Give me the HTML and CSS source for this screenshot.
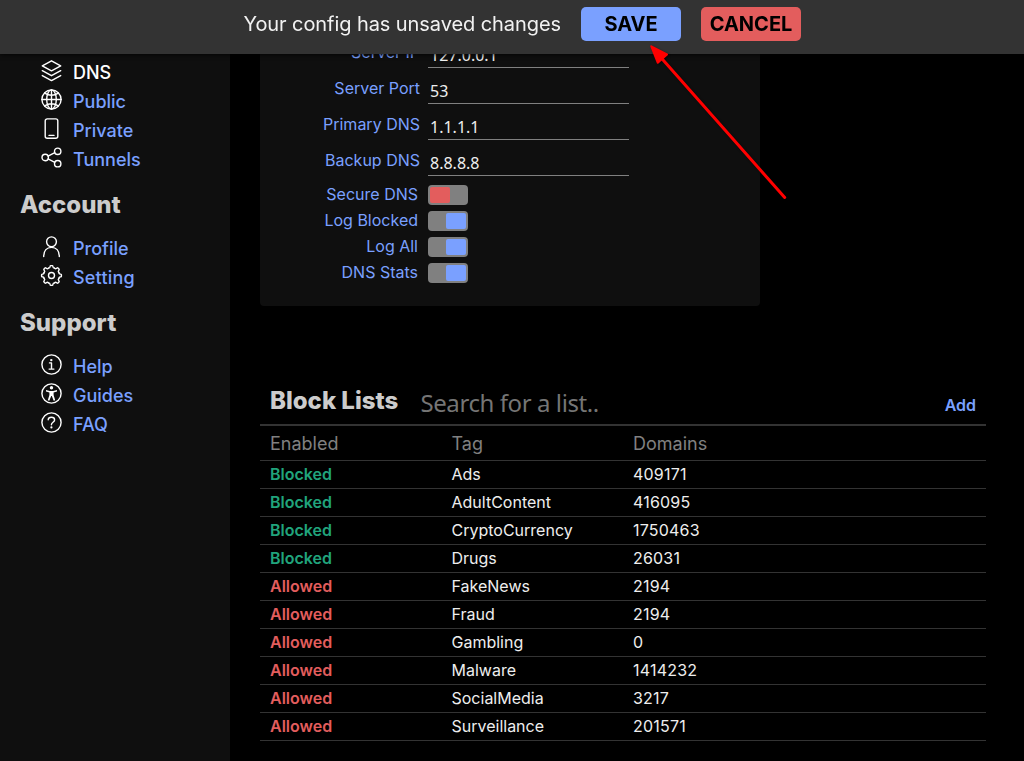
FILE: index.html
```html
<!DOCTYPE html>
<html lang="en">
<head>
<meta charset="utf-8">
<title>DNS configuration</title>
<link rel="stylesheet" href="styles.css">
</head>
<body>
<header class="notice">
  <span class="notice-text">Your config has unsaved changes</span>
  <button class="btn btn-save">SAVE</button>
  <button class="btn btn-cancel">CANCEL</button>
</header>
<div class="layout">
  <nav class="sidebar">
    <ul class="menu">
      <li class="item active"><svg class="icon" viewBox="-0.5 -0.5 22 22"><path d="M11 1.3 20.2 6.3 11 11.3 1.8 6.3ZM1.8 11.2 11 16.2 20.2 11.2M1.8 16.1 11 21.1 20.2 16.1"/></svg>DNS</li>
      <li class="item"><svg class="icon" viewBox="-0.5 -0.5 22 22"><circle cx="11" cy="11" r="9.6"/><ellipse cx="11" cy="11" rx="4.8" ry="9.6"/><path d="M11 1.4V20.6M1.4 11H20.6M4.2 4.6Q11 9 17.8 4.6M4.2 17.4Q11 13 17.8 17.4"/></svg>Public</li>
      <li class="item"><svg class="icon" viewBox="-0.5 -0.5 22 22"><rect x="4.7" y="1.4" width="12.6" height="19.3" rx="2"/><path d="M8.5 17.9h5"/></svg>Private</li>
      <li class="item"><svg class="icon" viewBox="-0.5 -0.5 22 22"><circle cx="4.7" cy="11" r="3.2"/><circle cx="17.2" cy="4.8" r="3.2"/><circle cx="17.2" cy="17.2" r="3.2"/><path d="M7.6 9.6 14.3 6.2M7.6 12.4 14.3 15.8"/></svg>Tunnels</li>
    </ul>
    <h2 class="group">Account</h2>
    <ul class="menu">
      <li class="item"><svg class="icon" viewBox="-0.5 -0.5 22 22"><circle cx="11" cy="6.3" r="4.9"/><path d="M3.2 21C3.2 15.2 6.4 11.9 11 11.9S18.8 15.2 18.8 21"/></svg>Profile</li>
      <li class="item setting"><svg class="icon" viewBox="-0.5 -0.5 22 22"><defs><path id="tooth" d="M7.94 3.61Q9.3 3.7 9.5 2.5L9.6 1.8Q9.7 1.1 10.3 1.1H11.7Q12.3 1.1 12.4 1.8L12.5 2.5Q12.7 3.7 14.06 3.61"/></defs><use href="#tooth"/><use href="#tooth" transform="rotate(45 11 11)"/><use href="#tooth" transform="rotate(90 11 11)"/><use href="#tooth" transform="rotate(135 11 11)"/><use href="#tooth" transform="rotate(180 11 11)"/><use href="#tooth" transform="rotate(225 11 11)"/><use href="#tooth" transform="rotate(270 11 11)"/><use href="#tooth" transform="rotate(315 11 11)"/><circle cx="11" cy="11" r="3"/></svg>Setting</li>
    </ul>
    <h2 class="group">Support</h2>
    <ul class="menu">
      <li class="item"><svg class="icon" viewBox="-0.5 -0.5 22 22"><circle cx="11" cy="11" r="9.6"/><circle class="solid" cx="10.8" cy="6.6" r="1.2"/><path d="M9 9.4h2v6.1M8.6 15.6h4.8"/></svg>Help</li>
      <li class="item"><svg class="icon" viewBox="-0.5 -0.5 22 22"><circle cx="11" cy="11" r="9.6"/><circle class="solid" cx="11" cy="5.3" r="1.7"/><path class="solid" d="M5.5 7.6 9.3 8.4H12.7L16.5 7.6V9L13.1 10V12.4L14.7 17.8 13.2 18.3 11.3 13.6H10.7L8.8 18.3 7.3 17.8 8.9 12.4V10L5.5 9Z"/></svg>Guides</li>
      <li class="item"><svg class="icon" viewBox="-0.5 -0.5 22 22"><circle cx="11" cy="11" r="9.6"/><path d="M7.7 8.2C7.8 6.6 9 5.8 10.9 5.8S14.1 6.9 14.1 8.4C14.1 10.7 10.9 10.8 10.9 13.2"/><circle class="solid" cx="10.9" cy="15.9" r="1.1"/></svg>FAQ</li>
    </ul>
  </nav>
  <main class="content">
    <section class="panel">
      <label class="field"><span class="label">Server IP</span><input class="input" value="127.0.0.1"></label>
      <label class="field"><span class="label">Server Port</span><input class="input" value="53"></label>
      <label class="field"><span class="label">Primary DNS</span><input class="input" value="1.1.1.1"></label>
      <label class="field"><span class="label">Backup DNS</span><input class="input" value="8.8.8.8"></label>
      <div class="toggles">
        <div class="switch-row"><span class="switch-label">Secure DNS</span><span class="switch"><i class="knob"></i></span></div>
        <div class="switch-row"><span class="switch-label">Log Blocked</span><span class="switch on"><i class="knob"></i></span></div>
        <div class="switch-row"><span class="switch-label">Log All</span><span class="switch on"><i class="knob"></i></span></div>
        <div class="switch-row"><span class="switch-label">DNS Stats</span><span class="switch on"><i class="knob"></i></span></div>
      </div>
    </section>
    <section class="lists">
      <div class="lists-head">
        <h2 class="lists-title">Block Lists</h2>
        <input class="search" placeholder="Search for a list..">
        <a class="add">Add</a>
      </div>
      <div class="row head"><span>Enabled</span><span>Tag</span><span>Domains</span></div>
      <div class="row"><b class="blocked">Blocked</b><span>Ads</span><span class="count">409171</span></div>
      <div class="row"><b class="blocked">Blocked</b><span>AdultContent</span><span class="count">416095</span></div>
      <div class="row"><b class="blocked">Blocked</b><span>CryptoCurrency</span><span class="count">1750463</span></div>
      <div class="row"><b class="blocked">Blocked</b><span>Drugs</span><span class="count">26031</span></div>
      <div class="row"><b class="allowed">Allowed</b><span>FakeNews</span><span class="count">2194</span></div>
      <div class="row"><b class="allowed">Allowed</b><span>Fraud</span><span class="count">2194</span></div>
      <div class="row"><b class="allowed">Allowed</b><span>Gambling</span><span class="count">0</span></div>
      <div class="row"><b class="allowed">Allowed</b><span>Malware</span><span class="count">1414232</span></div>
      <div class="row"><b class="allowed">Allowed</b><span>SocialMedia</span><span class="count">3217</span></div>
      <div class="row"><b class="allowed">Allowed</b><span>Surveillance</span><span class="count">201571</span></div>
    </section>
  </main>
</div>
<svg class="arrow" viewBox="0 0 160 170"><path class="shaft" d="M20 16.5 144.7 157.5"/><path class="tip" d="M11.3 6.3 27 14.5 17.8 22.8Z"/></svg>
</body>
</html>
```
FILE: styles.css
```css
* { box-sizing: border-box; }
body { margin: 0; height: 761px; overflow: hidden; background: #000; color: #eee; font-family: Inter, sans-serif; font-size: 16px; }
.notice { position: fixed; top: 0; left: 0; z-index: 2; width: 100%; height: 54px; padding: 7px 0 0 243.5px; display: flex; background: #333; box-shadow: 0 0 5px #000; }
.notice-text { width: 337.5px; font-size: 20px; line-height: 34px; letter-spacing: -0.08px; color: #f2f2f2; }
.btn { width: 100px; height: 34px; padding: 0; border: 0; border-radius: 5px; color: #000; font: 700 20px/34px Inter, sans-serif; }
.btn-save { background: #7aa0ff; margin-right: 20px; }
.btn-cancel { background: #e35d5d; }
.layout { display: flex; height: 761px; }
.sidebar { width: 230px; flex: none; padding-top: 58px; background: #0f0f0f; }
.menu { list-style: none; margin: 0; padding: 0 0 0 40px; }
.item { height: 29px; display: flex; gap: 11px; font-size: 18px; line-height: 29px; font-weight: 500; color: #7aa0ff; }
.active { color: #fff; }
.setting { letter-spacing: 0.2px; }
.icon { width: 22px; height: 22px; margin-top: 1px; flex: none; overflow: visible; fill: none; stroke: #fff; stroke-width: 1.4; stroke-linecap: round; stroke-linejoin: round; }
.solid { fill: #fff; stroke: none; }
.group { margin: 0; height: 60px; padding: 16px 0 0 20px; font-size: 24px; line-height: 30px; font-weight: 800; color: #ccc; }
.content { flex: 1; padding: 0 38px 0 30px; }
.panel { width: 500px; height: 306px; padding-top: 32px; background: #0f0f0f; border-radius: 4px; }
.field { display: flex; height: 36px; }
.label { width: 160px; margin-right: 8px; padding-top: 10px; line-height: 20px; text-align: right; color: #7aa0ff; }
.input { width: 201px; height: 36px; padding: 11px 2px 1px; border: 0; border-bottom: 1px solid #808080; background: none; color: #eee; font: 16px/22px "Noto Sans", sans-serif; outline: 0; }
.toggles { padding-top: 6px; }
.switch-row { display: flex; align-items: center; height: 26px; }
.switch-label { width: 158px; margin-right: 10px; padding-bottom: 2px; text-align: right; color: #7aa0ff; }
.switch { display: flex; width: 40px; height: 20px; padding: 2px; border-radius: 4px; background: #808080; }
.on { justify-content: flex-end; }
.knob { width: 20px; height: 16px; border-radius: 2px; background: #e35d5d; }
.on .knob { background: #7aa0ff; }
.lists { width: 726px; padding-top: 74px; }
.lists-head { display: flex; height: 46px; padding: 0 10px; border-bottom: 2px solid #333; }
.lists-title { margin: 0; width: 150.5px; font-size: 24px; line-height: 42px; font-weight: 800; color: #ccc; }
.search { flex: 1; min-width: 0; height: 46px; padding: 0; border: 0; background: none; font: 24px/46px "Noto Sans", sans-serif; letter-spacing: -0.42px; outline: 0; }
.search::placeholder { color: #757575; }
.add { line-height: 50px; font-weight: 600; color: #7aa0ff; }
.row { display: grid; grid-template-columns: 181.5px 181.5px 1fr; height: 28px; padding-left: 10px; border-bottom: 1px solid #333; line-height: 27px; }
.row b { font-weight: 600; }
.count { letter-spacing: 0.2px; }
.head { height: 35px; font-size: 18px; line-height: 35px; color: #808080; }
.blocked { color: #20a47c; }
.allowed { color: #e35d5d; }
.arrow { position: absolute; z-index: 3; left: 640px; top: 40px; width: 160px; height: 170px; filter: drop-shadow(1px 1px 1px #0008); }
.shaft { fill: none; stroke: #f00; stroke-width: 3; stroke-linecap: round; }
.tip { fill: #f00; stroke: #f00; stroke-width: 2; stroke-linejoin: round; }
```
